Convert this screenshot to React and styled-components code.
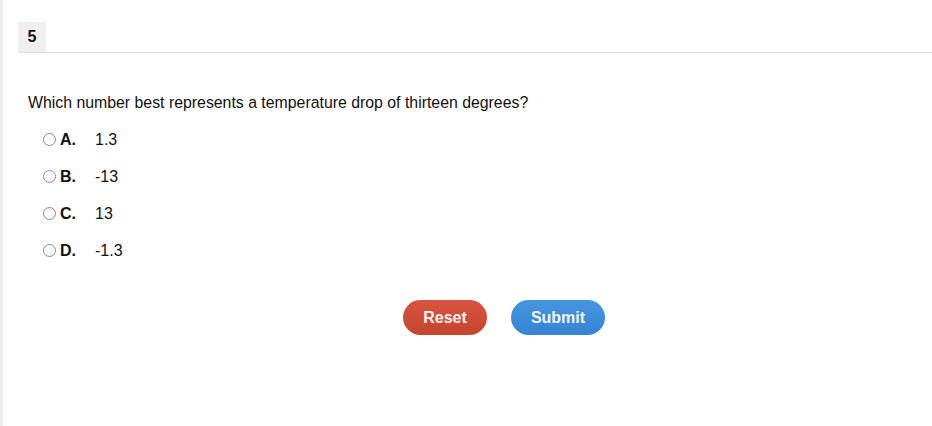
import React from "react";
import styled, { createGlobalStyle } from "styled-components";

const Global = createGlobalStyle`
  html, body { margin: 0; padding: 0; background: #fff; }
  body { font-family: "Liberation Sans", Arial, sans-serif; color: #111; }
`;

const Page = styled.div`
  min-height: 426px;
  border-left: 3px solid #ececec;
  padding: 22px 0 0 15px;
  box-sizing: border-box;
`;

const Header = styled.div`
  display: flex;
  border-bottom: 1px solid #dedede;
`;

const Num = styled.div`
  width: 28px;
  height: 30px;
  background: #efefef;
  display: flex;
  align-items: center;
  justify-content: center;
  font-weight: bold;
  font-size: 16px;
`;

const Body = styled.div`
  padding: 40px 0 0 10px;
`;

const Question = styled.div`
  font-size: 15.85px;
  line-height: 19px;
  margin-bottom: 18px;
`;

const Options = styled.div`
  display: flex;
  flex-direction: column;
  gap: 18px;
  padding-left: 15px;
`;

const Option = styled.label`
  display: flex;
  align-items: center;
  font-size: 16px;
  line-height: 19px;
`;

const Radio = styled.span`
  width: 11px;
  height: 11px;
  border: 1px solid #8a8a8a;
  border-radius: 50%;
  background: #fff;
  margin-right: 4px;
  flex: none;
`;

const Letter = styled.span`
  font-weight: bold;
  width: 35px;
`;

const Buttons = styled.div`
  display: flex;
  gap: 24px;
  padding: 40px 0 0 375px;
`;

const Btn = styled.button`
  height: 35px;
  width: ${(p) => p.$w}px;
  border: none;
  border-radius: 18px;
  color: #f4f4f4;
  font-family: "Liberation Sans", Arial, sans-serif;
  font-weight: bold;
  font-size: 16px;
  padding: 0;
  background: ${(p) =>
    p.$kind === "red"
      ? "linear-gradient(#d65441, #c6452f)"
      : "linear-gradient(#4596e0, #3584d3)"};
`;

const opts = [
  ["A.", "1.3"],
  ["B.", "-13"],
  ["C.", "13"],
  ["D.", "-1.3"],
];

export default function App() {
  return (
    <>
      <Global />
      <Page>
        <Header>
          <Num>5</Num>
        </Header>
        <Body>
          <Question>Which number best represents a temperature drop of thirteen degrees?</Question>
          <Options>
            {opts.map(([l, v]) => (
              <Option key={l}>
                <Radio />
                <Letter>{l}</Letter>
                <span>{v}</span>
              </Option>
            ))}
          </Options>
          <Buttons>
            <Btn $kind="red" $w={84}>Reset</Btn>
            <Btn $kind="blue" $w={94}>Submit</Btn>
          </Buttons>
        </Body>
      </Page>
    </>
  );
}
